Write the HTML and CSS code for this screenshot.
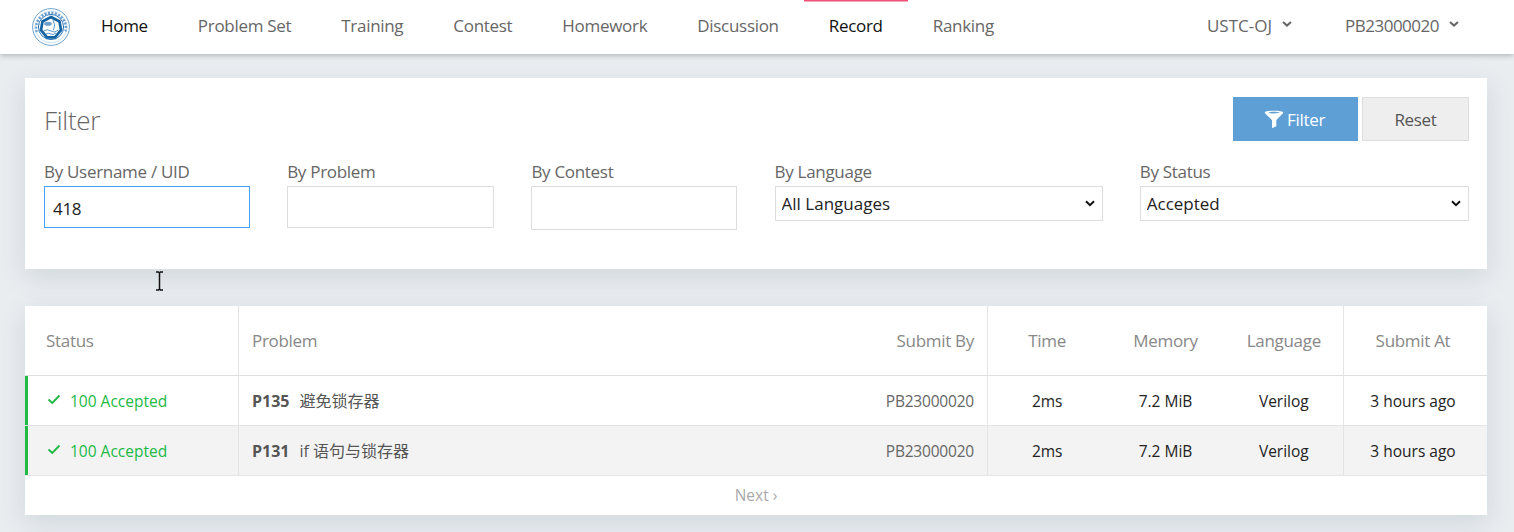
FILE: index.html
```html
<!DOCTYPE html>
<html lang="en">
<head>
<meta charset="utf-8">
<title>Record</title>
<link rel="stylesheet" href="styles.css">
</head>
<body>
<header class="nav">
  <svg class="logo" viewBox="0 0 38 38" width="38" height="38" aria-hidden="true">
    <circle cx="19" cy="19" r="18.400" fill="#fff" stroke="#6fa3cf" stroke-width="1"/>
    <path d="M4.600 24A15 15 0 1 1 33.400 24" fill="none" stroke="#3d82bf" stroke-width="2.600" stroke-dasharray="2 1.500" opacity=".8"/>
    <circle cx="19" cy="19" r="15.800" fill="none" stroke="#a9c9e4" stroke-width=".6"/>
    <circle cx="19" cy="19" r="12.600" fill="#fff" stroke="#2c76b6" stroke-width="1"/>
    <path d="M19 9 27.500 13.500 29 22 23 29.300H15L9 22 10.500 13.500Z" fill="#fff" stroke="#14629f" stroke-width="2.700"/>
    <ellipse cx="16" cy="15.800" rx="3.800" ry="2" fill="#6c9fcd"/>
    <path d="M11.500 23q4-2.500 7.500 0t7.500-1M14 26q3-1.500 5 0t5-1M21 12q3 5 .5 10" fill="none" stroke="#4a8bc4" stroke-width=".9"/>
  </svg>
  <a class="nav-item is-current" href="#">Home</a>
  <a class="nav-item" href="#">Problem Set</a>
  <a class="nav-item" href="#">Training</a>
  <a class="nav-item" href="#">Contest</a>
  <a class="nav-item" href="#">Homework</a>
  <a class="nav-item" href="#">Discussion</a>
  <a class="nav-item is-current is-active" href="#">Record</a>
  <a class="nav-item" href="#">Ranking</a>
  <span class="nav-space"></span>
  <a class="nav-item nav-menu" href="#">USTC-OJ<svg class="caret" viewBox="0 0 10 6" width="10" height="6"><path d="M1 1l4 3.600L9 1" fill="none" stroke="currentColor" stroke-width="2"/></svg></a>
  <a class="nav-item nav-menu nav-user" href="#">PB23000020<svg class="caret" viewBox="0 0 10 6" width="10" height="6"><path d="M1 1l4 3.600L9 1" fill="none" stroke="currentColor" stroke-width="2"/></svg></a>
</header>

<main class="main">
  <section class="card filter">
    <div class="filter-head">
      <h1 class="filter-title">Filter</h1>
      <div class="filter-actions">
        <button class="btn btn-primary" type="button"><svg viewBox="0 0 20 20" width="20" height="20" aria-hidden="true"><path d="M.8 3.500C.8 1.200 19.200 1.200 19.200 3.500C19.200 5 13.300 9 12.300 11.500V17.200L8 19.200V11.500C7 9 .8 5 .8 3.500ZM4 3.600C6 4.700 14 4.700 16 3.600C14 2.600 6 2.600 4 3.600Z" fill="#fff" fill-rule="evenodd"/></svg>Filter</button>
        <button class="btn btn-default" type="button">Reset</button>
      </div>
    </div>
    <div class="filter-grid">
      <label class="field"><span class="field-label">By Username / UID</span><input class="input input-focus" type="text" value="418"></label>
      <label class="field"><span class="field-label">By Problem</span><input class="input" type="text"></label>
      <label class="field"><span class="field-label">By Contest</span><input class="input input-contest" type="text"></label>
      <label class="field"><span class="field-label">By Language</span>
        <span class="select-wrap"><select class="select"><option>All Languages</option></select><svg class="select-arrow" viewBox="0 0 10 7" width="10" height="7" aria-hidden="true"><path d="M1 1.200l4 4 4-4" fill="none" stroke="#111" stroke-width="2"/></svg></span></label>
      <label class="field"><span class="field-label">By Status</span>
        <span class="select-wrap"><select class="select"><option>Accepted</option></select><svg class="select-arrow" viewBox="0 0 10 7" width="10" height="7" aria-hidden="true"><path d="M1 1.200l4 4 4-4" fill="none" stroke="#111" stroke-width="2"/></svg></span></label>
    </div>
    <svg class="ibeam" viewBox="0 0 9 20" width="9" height="20" aria-hidden="true"><path d="M1 1h2.500L4.500 2 5.500 1H8M4.500 2V18M1 19h2.500L4.500 18 5.500 19H8" fill="none" stroke="#111" stroke-width="1.500"/></svg>
  </section>

  <section class="card records">
    <table class="table">
      <colgroup>
        <col class="c-status"><col class="c-problem"><col class="c-by"><col class="c-num"><col class="c-num"><col class="c-num"><col class="c-at">
      </colgroup>
      <thead>
        <tr>
          <th class="col-status">Status</th>
          <th class="col-problem">Problem</th>
          <th class="col-by">Submit By</th>
          <th class="col-time">Time</th>
          <th>Memory</th>
          <th>Language</th>
          <th class="col-at">Submit At</th>
        </tr>
      </thead>
      <tbody>
        <tr>
          <td class="col-status"><span class="status"><svg viewBox="0 0 14 11" width="14" height="11"><path d="M1.500 5.500 5.300 9 12.500 1.500" fill="none" stroke="#21ba45" stroke-width="1.900"/></svg>100 Accepted</span></td>
          <td class="col-problem"><b>P135</b><span class="name">避免锁存器</span></td>
          <td class="col-by">PB23000020</td>
          <td class="col-time">2ms</td>
          <td>7.2 MiB</td>
          <td>Verilog</td>
          <td class="col-at">3 hours ago</td>
        </tr>
        <tr class="is-alt">
          <td class="col-status"><span class="status"><svg viewBox="0 0 14 11" width="14" height="11"><path d="M1.500 5.500 5.300 9 12.500 1.500" fill="none" stroke="#21ba45" stroke-width="1.900"/></svg>100 Accepted</span></td>
          <td class="col-problem"><b>P131</b><span class="name">if 语句与锁存器</span></td>
          <td class="col-by">PB23000020</td>
          <td class="col-time">2ms</td>
          <td>7.2 MiB</td>
          <td>Verilog</td>
          <td class="col-at">3 hours ago</td>
        </tr>
      </tbody>
    </table>
    <div class="pager">Next ›</div>
  </section>
</main>
</body>
</html>
```
FILE: styles.css
```css
* { box-sizing: border-box; }
html, body { margin: 0; height: 100%; overflow: hidden; }
body {
  background: #e9edf0;
  font-family: "Open Sans", "Noto Sans CJK SC", sans-serif;
  color: #333;
}
.nav {
  display: flex;
  align-items: stretch;
  height: 54px;
  padding: 0 55px 0 32px;
  background: #fff;
  box-shadow: 0 1px 6px rgba(0,0,0,.28);
  position: relative;
}
.logo { align-self: center; margin-right: 6px; }
.nav-item {
  display: flex;
  align-items: center;
  padding: 0 25px 3px;
  color: #666;
  font-size: 17px;
  text-decoration: none;
  letter-spacing: -.3px;
}
.nav-item.is-current { color: #111; }
.nav-item.is-active { box-shadow: inset 0 1.500px 0 #f0517b; }
.nav-space { flex: 1; }
.nav-menu { padding: 0 0 3px; margin-right: 53px; letter-spacing: 0; }
.nav-user { margin-right: 0; letter-spacing: -.5px; }
.caret { margin-left: 10px; margin-top: -3px; }
.main { display: flex; flex-direction: column; gap: 37px; padding: 24px 27px 0 25px; }
.card { background: #fff; box-shadow: 0 8px 24px rgba(80,100,120,.16); position: relative; }
.filter { height: 191px; padding: 19px 18px 0 19px; }
.filter-head { display: flex; justify-content: space-between; align-items: flex-start; height: 70px; }
.filter-title { margin: 7px 0 0; font-size: 26px; font-weight: 300; color: #666; line-height: 32px; letter-spacing: -.3px; }
.filter-actions { display: flex; gap: 4px; }
.btn {
  height: 44px;
  font: 17px "Open Sans", sans-serif;
  letter-spacing: -.3px;
  border: 0;
  display: flex;
  align-items: center;
  justify-content: center;
}
.btn-primary { width: 125px; padding: 0 2px 0 0; background: #5e9fd6; color: #fff; }
.btn-primary svg { margin-right: 3px; }
.btn-default { width: 107px; background: #eee; color: #555; border: 1px solid #ddd; }
.filter-grid {
  display: grid;
  grid-template-columns: 206px 207px 206px 328px 1fr;
  column-gap: 37.200px;
}
.field { display: flex; flex-direction: column; min-width: 0; }
.field-label { font-size: 17px; line-height: 26px; height: 26px; margin-top: -8px; margin-bottom: 1px; color: #666; letter-spacing: -.3px; }
.input {
  width: 100%;
  height: 42px;
  padding: 2px 8px 0;
  border: 1px solid #ddd;
  font: 17px "Open Sans", sans-serif;
  letter-spacing: -.3px;
  color: #222;
  outline: 0;
  background: #fff;
}
.input-contest { height: 44px; }
.input-focus { border-color: #45a1f5; }
.select-wrap { display: block; position: relative; height: 35px; }
.select {
  display: block;
  width: 100%;
  height: 35px;
  padding: 0 24px 0 6px;
  border: 1px solid #ddd;
  border-radius: 0;
  background: #fff;
  appearance: none;
  -webkit-appearance: none;
  font: 17px "Open Sans", sans-serif;
  color: #222;
}
.select-arrow { position: absolute; right: 8px; top: 14px; pointer-events: none; }
.ibeam { position: absolute; left: 130px; top: 193px; }
.records { height: 209px; }
.table { width: 100%; border-collapse: separate; border-spacing: 0; table-layout: fixed; font-size: 15.500px; }
.c-status { width: 214px; }
.c-by { width: 260px; }
.c-num { width: 118.330px; }
.c-at { width: 144px; }
.table th {
  height: 70px;
  padding: 0 0 1px;
  font-weight: 400;
  font-size: 17px;
  color: #888;
  text-align: center;
  border-bottom: 1px solid #e0e0e0;
  letter-spacing: -.3px;
}
.table td {
  height: 50px;
  padding: 0;
  text-align: center;
  color: #222;
  border-bottom: 1px solid #e4e4e4;
}
.is-alt td { background: #f3f3f3; }
.table .col-status { text-align: left; padding-left: 21px; border-right: 1px solid #e4e4e4; }
.table td.col-status { padding-bottom: 2px; box-shadow: inset 3px 0 0 #21ba45; }
.table .col-problem { text-align: left; padding-left: 13px; color: #888; }
.table td.col-problem { padding-bottom: 2px; color: #555; }
.table td.col-problem b { margin-right: 10px; font-size: 16px; }
.name { font-size: 16px; }
.table .col-by { text-align: right; padding-right: 13px; border-right: 1px solid #e4e4e4; }
.table td.col-by { color: #666; letter-spacing: -.2px; }
.table .col-at { padding-right: 5px; border-left: 1px solid #e4e4e4; }
.status { display: inline-flex; align-items: center; color: #21ba45; }
.status svg { margin-right: 9px; margin-top: -3px; margin-left: 1px; }
.pager { height: 38px; display: flex; align-items: center; justify-content: center; font-size: 15.500px; color: #aaa; }
```
